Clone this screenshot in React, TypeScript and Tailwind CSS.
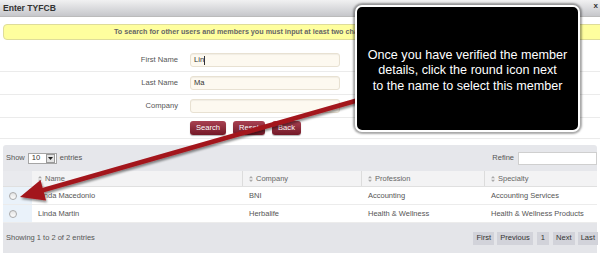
import React from "react";

const SortIcon = () => (
  <svg width="4" height="6" viewBox="0 0 4 6" className="mr-[3px] inline-block">
    <path d="M2 0 L4 2.3 L0 2.3 Z M2 6 L4 3.7 L0 3.7 Z" fill="#aaa" />
  </svg>
);

const Radio = () => (
  <span className="block w-[8px] h-[8px] rounded-full border border-[#a9a9a9] bg-gradient-to-b from-[#e4e4e4] to-[#fdfdfd]" />
);

export default function App() {
  const rows = [
    ["Linda Macedonio", "BNI", "Accounting", "Accounting Services"],
    ["Linda Martin", "Herbalife", "Health & Wellness", "Health & Wellness Products"],
  ];
  const inputs: [string, string][] = [
    ["First Name", "Lin"],
    ["Last Name", "Ma"],
    ["Company", ""],
  ];
  const buttons: [string, string][] = [
    ["Search", "w-[36px]"],
    ["Reset", "w-[32px]"],
    ["Back", "w-[29px]"],
  ];
  return (
    <div className="relative w-[600px] h-[253px] overflow-hidden bg-white font-['Liberation_Sans',Arial,sans-serif] text-[7.5px] text-[#555]">
      {/* title bar */}
      <div className="h-[17px] flex items-center justify-between pl-[3px] pr-[2px] bg-gradient-to-b from-[#f1f1f2] to-[#c6c7cb] border-b border-[#bbb]">
        <span className="text-[8.6px] font-bold text-[#333]">Enter TYFCB</span>
        <span className="text-[8px] font-bold text-[#333] mb-[4px]">x</span>
      </div>

      {/* notice */}
      <div className="pt-[7px] pl-[3px] mr-[-6px]">
        <div className="h-[16px] flex items-center rounded-[4px] border border-[#dedc9a] bg-[#fefe9e] pl-[110px] font-bold text-[7.2px] text-[#666] whitespace-nowrap">
          To search for other users and members you must input at least two characters in any field
        </div>
      </div>

      {/* form */}
      <div className="mt-[9px]">
        {inputs.map(([label, val], i) => (
          <div key={label} className="h-[23px] flex items-center border-b border-[#ebebeb]">
            <span className="w-[178px] text-right text-[7.6px] text-[#555]">{label}</span>
            <div className="ml-[12px] w-[150px] h-[14px] rounded-[3px] border border-[#e8e1d2] bg-[#fdf9f0] shadow-[inset_0_1px_1px_rgba(0,0,0,0.05)] flex items-center px-[3px] text-[7.6px] text-[#333]">
              {val}
              {i === 0 && <span className="w-px h-[9px] bg-[#333]" />}
            </div>
          </div>
        ))}
        <div className="h-[21px] flex items-center border-b border-[#ebebeb] pl-[190px] gap-[7px]">
          {buttons.map(([b, w]) => (
            <span
              key={b}
              className={`${w} h-[14px] flex items-center justify-center rounded-[3px] bg-gradient-to-b from-[#a94152] to-[#731827] text-white text-[7.6px] shadow-[0_1px_1px_rgba(0,0,0,0.3)]`}
            >
              {b}
            </span>
          ))}
        </div>
      </div>

      {/* table panel */}
      <div className="mt-[6px] mx-[3px] bg-[#e6e7eb] rounded-t-[3px]">
        <div className="h-[26px] flex items-center justify-between px-[3px]">
          <div className="flex items-center gap-[3px]">
            <span>Show</span>
            <div className="flex items-center w-[29px] h-[11px] bg-white border border-[#a5a5a5]">
              <span className="flex-1 pl-[3px] text-[7.6px] text-[#333]">10</span>
              <span className="w-[9px] h-[9px] mr-[1px] bg-[#e3e3e3] border border-[#999] flex items-center justify-center">
                <svg width="5" height="3" viewBox="0 0 5 3"><path d="M0 0 L5 0 L2.5 3 Z" fill="#222" /></svg>
              </span>
            </div>
            <span>entries</span>
          </div>
          <div className="flex items-center gap-[4px] mr-[-3px]">
            <span>Refine</span>
            <div className="w-[79px] h-[13px] bg-white border border-[#cfcfcf]" />
          </div>
        </div>

        {/* header */}
        <div className="grid grid-cols-[29px_211px_119px_123px_1fr] h-[16px] border-b border-[#e0e0e0]">
          <div className="bg-[#e9eaee]" />
          {["Name", "Company", "Profession", "Specialty"].map((h, i) => (
            <div key={h} className={`flex items-center pl-[6px] bg-[#f3f3f4] text-[#666] ${i < 3 ? "border-r border-[#dcdcdc]" : ""}`}>
              <SortIcon />
              <span>{h}</span>
            </div>
          ))}
        </div>

        {rows.map((r, i) => (
          <div key={i} className="grid grid-cols-[29px_211px_119px_123px_1fr] h-[18px] border-b border-[#ececec] bg-white">
            <div className="bg-[#eaf2fa] flex items-center pl-[6px]">
              <Radio />
            </div>
            {r.map((c, j) => (
              <div key={j} className="flex items-center pl-[6px] whitespace-nowrap text-[#555]">
                {c}
              </div>
            ))}
          </div>
        ))}

        {/* footer */}
        <div className="h-[30px] flex items-center justify-between pl-[3px] bg-[#e4e5e9]">
          <span className="text-[#555]">Showing 1 to 2 of 2 entries</span>
          <div className="flex items-center gap-[3px] mr-[-1px]">
            {["First", "Previous", "1", "Next", "Last"].map((p) => (
              <span key={p} className={`h-[13px] flex items-center ${p === "1" ? "px-[4px] mx-[1px]" : "px-[3px]"} bg-[#d2d3da] text-[#333] text-[7.6px]`}>
                {p}
              </span>
            ))}
          </div>
        </div>
      </div>

      {/* arrow */}
      <svg className="absolute left-0 top-0 pointer-events-none" width="600" height="253" viewBox="0 0 600 253">
        <defs>
          <filter id="sh" x="-10%" y="-10%" width="120%" height="130%">
            <feDropShadow dx="1" dy="2" stdDeviation="1.2" floodColor="#000" floodOpacity="0.45" />
          </filter>
        </defs>
        <g filter="url(#sh)">
          <line x1="362" y1="99" x2="40" y2="191" stroke="#a3141b" strokeWidth="4.5" strokeLinecap="round" />
          <polygon points="20,197 40.5,180 46,200.5" fill="#a3141b" />
        </g>
      </svg>

      {/* callout */}
      <div className="absolute left-[355px] top-[5px] w-[225px] h-[127px] rounded-[7px] border-2 border-white bg-black shadow-[0_0_2px_2px_rgba(0,0,0,0.35)] flex items-center justify-center">
        <p className="text-white text-[12.6px] leading-[15.5px] text-center mt-[5px]">
          Once you have verified the member
          <br />
          details, click the round icon next
          <br />
          to the name to select this member
        </p>
      </div>
    </div>
  );
}
